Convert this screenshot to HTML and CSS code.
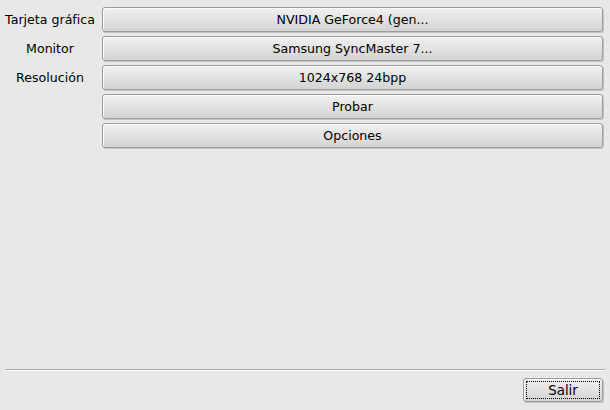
FILE: index.html
```html
<!DOCTYPE html>
<html lang="es">
<head>
<meta charset="utf-8">
<link rel="stylesheet" href="styles.css">
</head>
<body>
<div class="window">
  <div class="main">
    <div class="label">Tarjeta gráfica</div>
    <div class="btn">NVIDIA GeForce4 (gen...</div>
    <div class="label">Monitor</div>
    <div class="btn">Samsung SyncMaster 7...</div>
    <div class="label">Resolución</div>
    <div class="btn">1024x768 24bpp</div>
    <div class="label"></div>
    <div class="btn">Probar</div>
    <div class="label"></div>
    <div class="btn">Opciones</div>
  </div>
  <div class="sep"></div>
  <div class="footer">
    <div class="btn btn-small"><span class="focus">Salir</span></div>
  </div>
</div>
</body>
</html>
```

FILE: styles.css
```css
html, body {
  margin: 0;
  padding: 0;
}
body {
  background: #e8e8e8;
  font-family: "DejaVu Sans", sans-serif;
  font-size: 12.6px;
  color: #000;
}
.window {
  display: flex;
  flex-direction: column;
  height: 410px;
}
.main {
  flex: 1;
  display: grid;
  grid-template-columns: 100px 1fr;
  grid-auto-rows: 25px;
  column-gap: 2px;
  row-gap: 4px;
  padding: 7px 7px 0 0;
  align-content: start;
}
.label {
  display: flex;
  align-items: center;
  justify-content: center;
  white-space: nowrap;
}
.btn {
  box-sizing: border-box;
  height: 25px;
  border: 1px solid #9c9c9c;
  border-radius: 3px;
  background: linear-gradient(#f1f1f1, #d3d3d3);
  box-shadow: inset 1px 1px 0 #fafafa, 1px 1px 0 #c2c2c2;
  display: flex;
  align-items: center;
  justify-content: center;
  white-space: nowrap;
}
.sep {
  margin: 0 5px;
  height: 0;
  border-top: 1px solid #a9a9a9;
  border-bottom: 1px solid #ffffff;
}
.footer {
  display: flex;
  justify-content: flex-end;
  padding: 7px 7px 8px 0;
}
.btn-small {
  width: 80px;
  height: 24px;
  padding: 2px;
  font-size: 13.4px;
}
.focus {
  flex: 1;
  align-self: stretch;
  display: flex;
  align-items: center;
  justify-content: center;
  border: 1px dotted #000;
}
```
